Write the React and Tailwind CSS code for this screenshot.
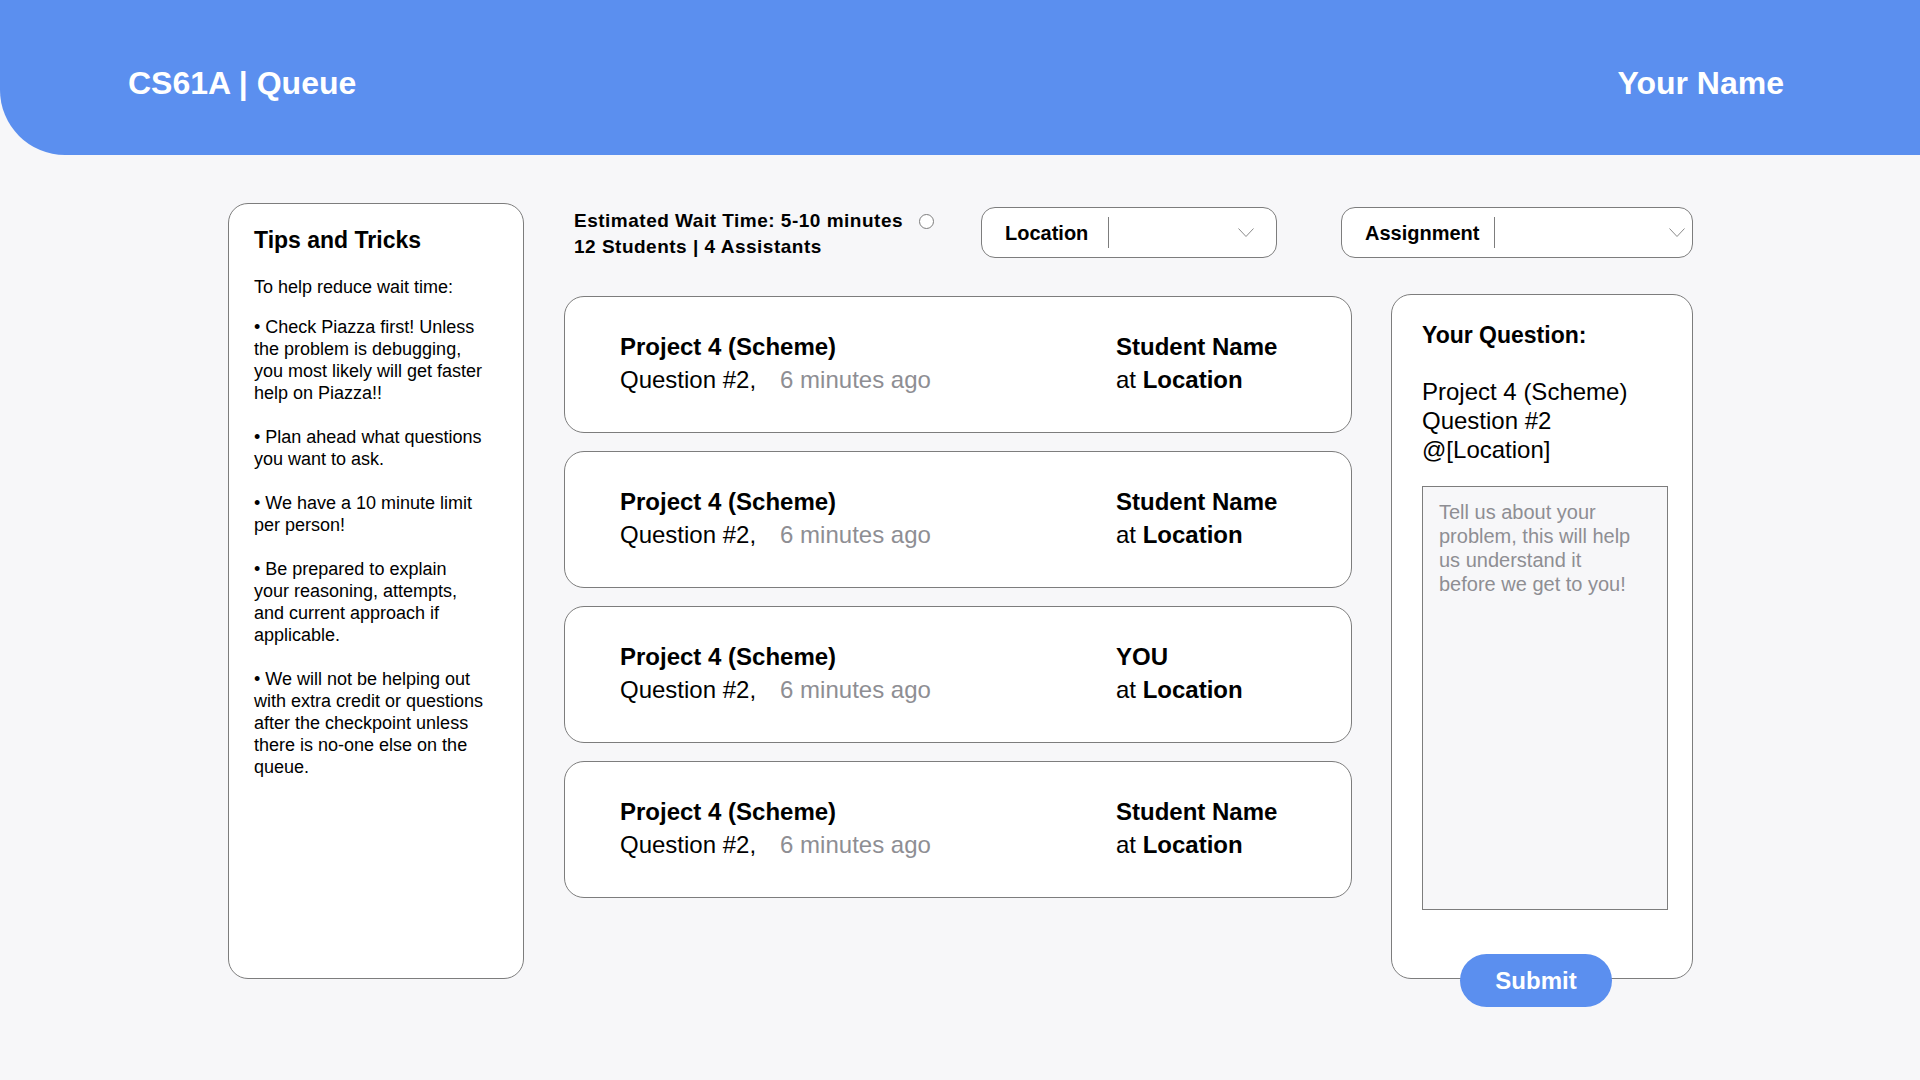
import React from "react";

const tips = [
  ["• Check Piazza first! Unless", "the problem is debugging,", "you most likely will get faster", "help on Piazza!!"],
  ["• Plan ahead what questions", "you want to ask."],
  ["• We have a 10 minute limit", "per person!"],
  ["• Be prepared to explain", "your reasoning, attempts,", "and current approach if", "applicable."],
  ["• We will not be helping out", "with extra credit or questions", "after the checkpoint unless", "there is no-one else on the", "queue."],
];

const queue = [
  { name: "Student Name" },
  { name: "Student Name" },
  { name: "YOU" },
  { name: "Student Name" },
];

const Chevron = () => (
  <svg width="16" height="9" viewBox="0 0 16 9" fill="none">
    <polyline points="0.5,0.5 8,8.5 15.5,0.5" stroke="#8a8a8a" strokeWidth="1" />
  </svg>
);

const Dropdown = ({ label, width, dividerGap, chevronGap }) => (
  <div
    className={`flex items-center h-[51px] ${width} rounded-[14px] border border-[#7d7d7d] bg-white pl-[23px]`}
  >
    <span className="text-[20px] font-bold text-black">{label}</span>
    <div className={`w-px h-[31px] bg-[#7d7d7d] ${dividerGap}`} />
    <div className="flex-1" />
    <div className={chevronGap}>
      <Chevron />
    </div>
  </div>
);

const QueueCard = ({ name }) => (
  <div className="flex w-[788px] h-[137px] rounded-[20px] border border-[#7d7d7d] bg-white pt-[33px] pl-[55px]">
    <div className="w-[496px] text-[24px] leading-[33px]">
      <div className="font-bold text-black">Project 4 (Scheme)</div>
      <div className="text-black">
        Question #2,
        <span className="ml-[24px] text-[#8e8e93]">6 minutes ago</span>
      </div>
    </div>
    <div className="text-[24px] leading-[33px] text-black">
      <div className="font-bold">{name}</div>
      <div>
        at <span className="font-bold">Location</span>
      </div>
    </div>
  </div>
);

const App = () => {
  return (
    <div className="min-h-screen bg-[#f7f7f9] font-['Liberation_Sans',Arial,sans-serif]">
      {/* Header */}
      <header className="flex justify-between h-[155px] bg-[#5b8fef] rounded-bl-[65px] pt-[64px] pl-[128px] pr-[136px]">
        <h1 className="text-[32px] leading-[38px] font-bold text-white">CS61A | Queue</h1>
        <span className="text-[32px] leading-[38px] font-bold text-white">Your Name</span>
      </header>

      <main className="flex gap-[40px] pt-[48px] pl-[228px]">
        {/* Tips */}
        <aside className="w-[296px] h-[776px] rounded-[20px] border border-[#7d7d7d] bg-white pt-[22px] pl-[25px] pr-[10px] text-black">
          <h2 className="text-[23px] leading-[28px] font-bold">Tips and Tricks</h2>
          <p className="mt-[22px] text-[18px] leading-[22px]">To help reduce wait time:</p>
          <div className="mt-[18px] flex flex-col gap-[22px] text-[18px] leading-[22px]">
            {tips.map((lines, i) => (
              <p key={i} className="whitespace-nowrap">
                {lines.map((l, j) => (
                  <React.Fragment key={j}>
                    {l}
                    {j < lines.length - 1 && <br />}
                  </React.Fragment>
                ))}
              </p>
            ))}
          </div>
        </aside>

        {/* Queue + question */}
        <section className="flex flex-col w-[1129px] pt-[4px]">
          <div className="flex items-start h-[51px]">
            <div className="w-[417px] pl-[10px] pt-[1px] text-[19px] leading-[26px] tracking-[0.5px] font-bold text-black">
              <div className="flex items-center">
                Estimated Wait Time: 5-10 minutes
                <span className="ml-[16px] w-[15px] h-[15px] rounded-full border border-[#7d7d7d] bg-white" />
              </div>
              <div>12 Students | 4 Assistants</div>
            </div>
            <Dropdown label="Location" width="w-[296px]" dividerGap="ml-[20px]" chevronGap="mr-[22px]" />
            <div className="ml-[64px]">
              <Dropdown label="Assignment" width="w-[352px]" dividerGap="ml-[15px]" chevronGap="mr-[7px]" />
            </div>
          </div>

          <div className="flex items-start mt-[36px]">
            <div className="flex flex-col gap-[18px] mt-[2px]">
              {queue.map((q, i) => (
                <QueueCard key={i} name={q.name} />
              ))}
            </div>

            <div className="relative ml-[39px] w-[302px] h-[685px] rounded-[20px] border border-[#7d7d7d] bg-white pt-[26px] pl-[30px] text-black">
              <h3 className="text-[23px] leading-[28px] font-bold">Your Question:</h3>
              <div className="mt-[28px] text-[24px] leading-[29px]">
                <div>Project 4 (Scheme)</div>
                <div>Question #2</div>
                <div>@[Location]</div>
              </div>
              <textarea
                className="mt-[22px] block w-[246px] h-[424px] resize-none border border-[#7d7d7d] bg-[#f7f7f9] pl-[16px] pr-[30px] pt-[13px] text-[20px] leading-[24px] text-black placeholder:text-[#8e8e93] outline-none"
                placeholder="Tell us about your problem, this will help us understand it before we get to you!"
              />
              <button className="absolute left-[68px] bottom-[-29px] w-[152px] h-[53px] rounded-full bg-[#5b8fef] text-[24px] font-bold text-white">
                Submit
              </button>
            </div>
          </div>
        </section>
      </main>
    </div>
  );
};

export default App;
